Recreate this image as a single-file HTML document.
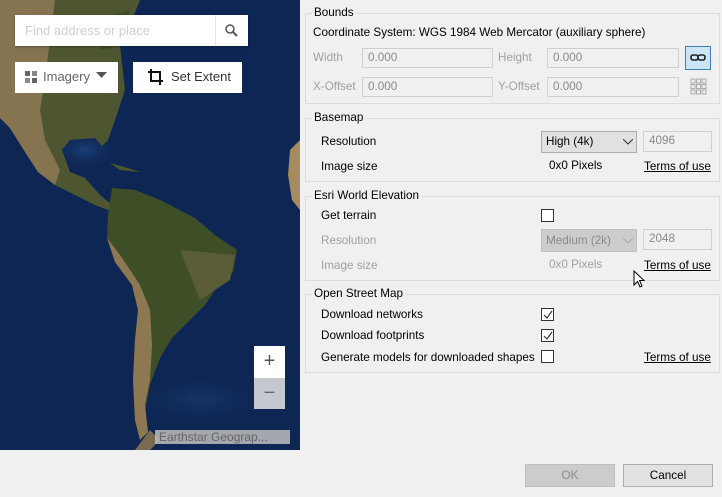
<!DOCTYPE html>
<html><head><meta charset="utf-8"><style>
*{margin:0;padding:0;box-sizing:border-box}
body{width:722px;height:497px;background:#f0f0f0;position:relative;overflow:hidden;font-family:"Liberation Sans",sans-serif;font-size:11.7px;color:#000}
.a{position:absolute}
.lbl{position:absolute;line-height:14px;white-space:nowrap}
.dis{color:#a0a0a0}
.gb{position:absolute;border:1px solid #dcdcdc}
.gt{position:absolute;background:#f0f0f0;padding:0 2px;line-height:14px;top:-8px;left:6px}
.in{position:absolute;background:#f0f0f0;border:1px solid #cfcfcf;color:#8a8a8a;padding-left:5px;line-height:18px}
.cb{position:absolute;width:13px;height:13px;border:1px solid #333;background:#fff}
.tu{position:absolute;text-decoration:underline;line-height:14px}
.btn{position:absolute;border:1px solid #adadad;background:#e1e1e1;text-align:center;line-height:21px}
</style></head><body>
<div class="a" style="left:0;top:0;width:300px;height:450px;overflow:hidden;background:#0e2654">
<svg width="300" height="450" viewBox="0 0 300 450">
<defs><radialGradient id="g1" cx="0.5" cy="0.5" r="0.5"><stop offset="0" stop-color="#1a4078"/><stop offset="1" stop-color="#0e2654" stop-opacity="0"/></radialGradient></defs>
<rect width="300" height="450" fill="#0e2654"/>
<ellipse cx="200" cy="400" rx="70" ry="25" fill="url(#g1)" opacity=".6"/>
<ellipse cx="85" cy="150" rx="35" ry="20" fill="url(#g1)"/>
<path d="M0 0H140L130 25L120 45L125 90L115 120L108 140L102 146L95 138L70 140L62 150L70 172L85 178L100 195L112 205L108 210L95 205L75 195L55 185L38 172L25 152L10 128L0 118Z" fill="#4d5630"/>
<path d="M0 0H55L50 40L45 80L40 110L45 140L60 170L55 185L38 172L25 152L10 128L0 118Z" fill="#85744f"/>
<path d="M95 20L130 10L125 45L100 50Z" fill="#3f4e2a"/>
<path d="M110 163L128 168L140 172L120 170Z" fill="#4a5a30"/>
<path d="M112 188L135 190L160 200L195 218L215 235L237 250L233 272L215 290L205 305L190 320L172 338L160 358L150 385L145 410L148 432L140 440L135 420L133 380L135 340L138 310L132 285L115 262L107 238L108 215Z" fill="#3e4f28"/>
<path d="M107 238L115 262L132 285L138 310L135 340L133 380L135 420L140 440L148 432L145 405L150 380L152 345L150 310L140 285L120 255Z" fill="#8e7852"/>
<path d="M180 250L235 255L230 280L200 300Z" fill="#5a5d36"/>
<path d="M290 150L300 140V210L292 200L288 175Z" fill="#a58c60"/>
<path d="M150 430L160 440L150 450H135Z" fill="#7a6a50"/>
</svg>
</div>
<div class="a" style="left:15px;top:15px;width:233px;height:31px;background:#fff;box-shadow:0 1px 2px rgba(0,0,0,.3)"></div>
<div class="lbl" style="left:25px;top:24px;color:#cfcfcf;font-size:13px">Find address or place</div>
<div class="a" style="left:215px;top:15px;width:1px;height:31px;background:#e6e6e6"></div>
<svg class="a" style="left:224px;top:23px" width="16" height="16"><circle cx="6" cy="6" r="4" fill="none" stroke="#555" stroke-width="1.5"/><path d="M9 9L13 13" stroke="#555" stroke-width="2"/></svg>
<div class="a" style="left:15px;top:62px;width:103px;height:31px;background:#fff"></div>
<svg class="a" style="left:24px;top:70px" width="14" height="14"><rect x="1" y="1" width="5" height="5" fill="#666"/><rect x="8" y="1" width="5" height="5" fill="#888"/><rect x="1" y="8" width="5" height="5" fill="#888"/><rect x="8" y="8" width="5" height="5" fill="#666"/></svg>
<div class="lbl" style="left:43px;top:70px;color:#666;font-size:13px">Imagery</div>
<svg class="a" style="left:96px;top:72px" width="12" height="8"><path d="M0 0H11L5.5 6Z" fill="#555"/></svg>
<div class="a" style="left:133px;top:62px;width:109px;height:31px;background:#fff"></div>
<svg class="a" style="left:147px;top:68px" width="18" height="18"><path d="M4 1V13H16M1 4H13V17" fill="none" stroke="#111" stroke-width="2"/></svg>
<div class="lbl" style="left:171px;top:70px;color:#333;font-size:13px">Set Extent</div>
<div class="a" style="left:254px;top:346px;width:31px;height:32px;background:#fff;color:#555;font-size:20px;text-align:center;line-height:31px">+</div>
<div class="a" style="left:254px;top:378px;width:31px;height:31px;background:#c6c8d0;color:#666;font-size:20px;text-align:center;line-height:30px">−</div>
<div class="a" style="left:155px;top:430px;width:135px;height:14px;background:rgba(190,190,190,.85);color:#666;font-size:12px;line-height:14px;padding-left:4px;white-space:nowrap;overflow:hidden">Earthstar Geograp...</div>

<div class="gb" style="left:305px;top:13px;width:415px;height:91px"><div class="gt">Bounds</div></div>
<div class="lbl" style="left:313px;top:26px">Coordinate System: WGS 1984 Web Mercator (auxiliary sphere)</div>
<div class="lbl dis" style="left:313px;top:51px">Width</div>
<div class="in" style="left:362px;top:48px;width:131px;height:20px">0.000</div>
<div class="lbl dis" style="left:498px;top:51px">Height</div>
<div class="in" style="left:547px;top:48px;width:132px;height:20px">0.000</div>
<div class="a" style="left:685px;top:46px;width:26px;height:24px;background:#cce4f7;border:1px solid #3c7fb1"></div>
<svg class="a" style="left:690px;top:53px" width="16" height="10"><rect x="1" y="2" width="7" height="5" rx="2" fill="none" stroke="#222" stroke-width="1.6"/><rect x="8" y="2" width="7" height="5" rx="2" fill="none" stroke="#222" stroke-width="1.6"/></svg>
<div class="lbl dis" style="left:313px;top:80px">X-Offset</div>
<div class="in" style="left:362px;top:77px;width:131px;height:20px">0.000</div>
<div class="lbl dis" style="left:498px;top:80px">Y-Offset</div>
<div class="in" style="left:547px;top:77px;width:132px;height:20px">0.000</div>
<svg class="a" style="left:690px;top:78px" width="17" height="17"><g fill="none" stroke="#aaa"><rect x="1" y="1" width="4" height="4"/><rect x="6.5" y="1" width="4" height="4"/><rect x="12" y="1" width="4" height="4"/><rect x="1" y="6.5" width="4" height="4"/><rect x="6.5" y="6.5" width="4" height="4"/><rect x="12" y="6.5" width="4" height="4"/><rect x="1" y="12" width="4" height="4"/><rect x="6.5" y="12" width="4" height="4"/><rect x="12" y="12" width="4" height="4"/></g></svg>

<div class="gb" style="left:305px;top:118px;width:415px;height:64px"><div class="gt">Basemap</div></div>
<div class="lbl" style="left:321px;top:135px">Resolution</div>
<div class="a" style="left:541px;top:131px;width:96px;height:22px;background:#e1e1e1;border:1px solid #adadad;padding-left:4px;line-height:20px">High (4k)</div>
<svg class="a" style="left:623px;top:139px" width="10" height="6"><path d="M0 0L5 5L10 0" fill="none" stroke="#333"/></svg>
<div class="in" style="left:643px;top:131px;width:69px;height:21px">4096</div>
<div class="lbl" style="left:321px;top:160px">Image size</div>
<div class="lbl" style="left:549px;top:159px">0x0 Pixels</div>
<div class="tu" style="left:644px;top:160px">Terms of use</div>

<div class="gb" style="left:305px;top:196px;width:415px;height:85px"><div class="gt">Esri World Elevation</div></div>
<div class="lbl" style="left:321px;top:209px">Get terrain</div>
<div class="cb" style="left:541px;top:209px"></div>
<div class="lbl dis" style="left:321px;top:234px">Resolution</div>
<div class="a" style="left:541px;top:229px;width:96px;height:23px;background:#cccccc;border:1px solid #bfbfbf;padding-left:4px;line-height:21px;color:#8a8a8a">Medium (2k)</div>
<svg class="a" style="left:623px;top:238px" width="10" height="6"><path d="M0 0L5 5L10 0" fill="none" stroke="#aaa"/></svg>
<div class="in" style="left:643px;top:229px;width:69px;height:21px">2048</div>
<div class="lbl dis" style="left:321px;top:259px">Image size</div>
<div class="lbl dis" style="left:549px;top:258px">0x0 Pixels</div>
<div class="tu" style="left:644px;top:259px">Terms of use</div>
<svg class="a" style="left:633px;top:270px" width="14" height="20"><path d="M1 1V15L4.5 11.5L7 17L9 16L6.5 10.5H11Z" fill="#fff" stroke="#000"/></svg>

<div class="gb" style="left:305px;top:294px;width:415px;height:79px"><div class="gt">Open Street Map</div></div>
<div class="lbl" style="left:321px;top:308px">Download networks</div>
<div class="cb" style="left:541px;top:308px"></div>
<svg class="a" style="left:543px;top:310px" width="10" height="10"><path d="M1 5L4 8L9 1" fill="none" stroke="#333" stroke-width="1.2"/></svg>
<div class="lbl" style="left:321px;top:329px">Download footprints</div>
<div class="cb" style="left:541px;top:329px"></div>
<svg class="a" style="left:543px;top:331px" width="10" height="10"><path d="M1 5L4 8L9 1" fill="none" stroke="#333" stroke-width="1.2"/></svg>
<div class="lbl" style="left:321px;top:351px">Generate models for downloaded shapes</div>
<div class="cb" style="left:541px;top:350px"></div>
<div class="tu" style="left:644px;top:351px">Terms of use</div>

<div class="btn" style="left:525px;top:464px;width:90px;height:23px;background:#cccccc;border-color:#bfbfbf;color:#8a8a8a">OK</div>
<div class="btn" style="left:623px;top:464px;width:90px;height:23px">Cancel</div>
</body></html>
